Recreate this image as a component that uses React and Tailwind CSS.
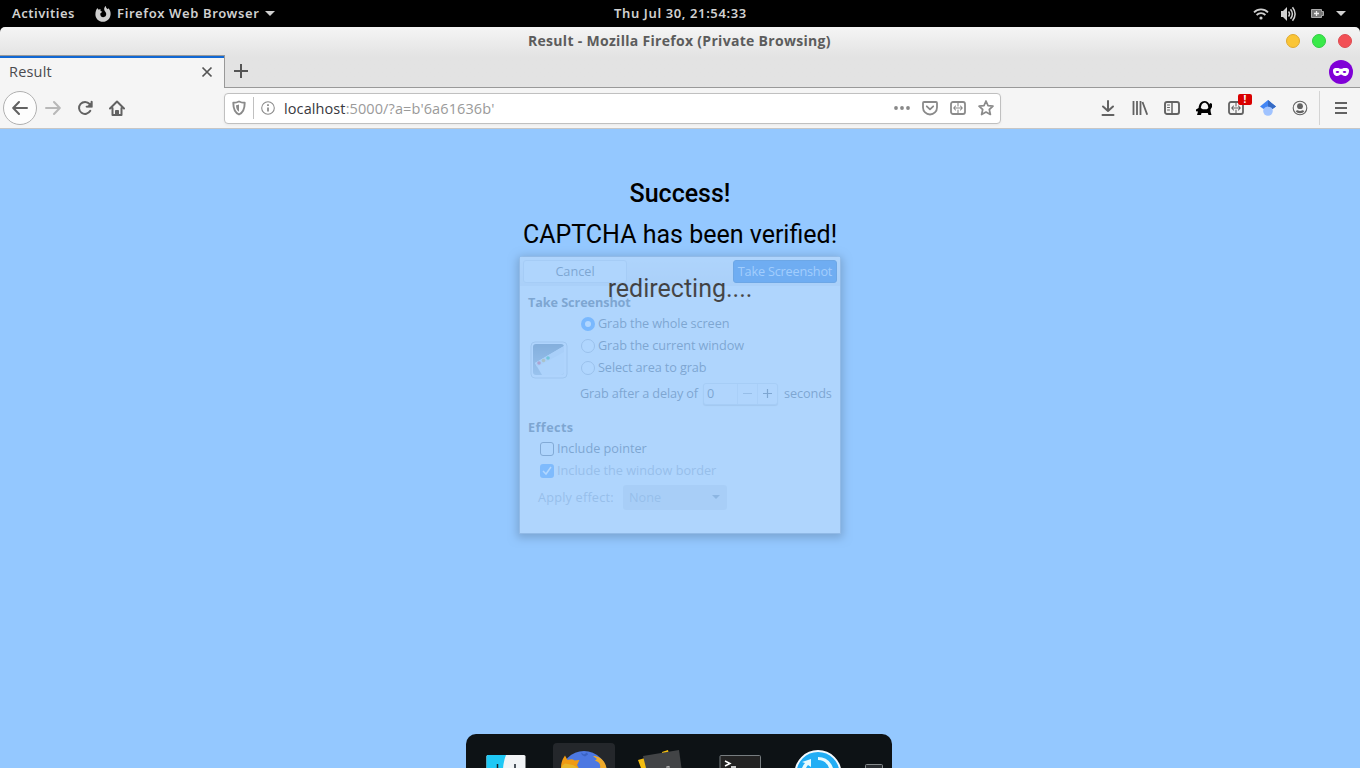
import React from "react";

function Icon({ className = "", size = "size-4", children }) {
  return (
    <svg
      viewBox="0 0 16 16"
      className={`${size} shrink-0 ${className}`}
      fill="none"
      stroke="currentColor"
      strokeWidth="2"
      strokeLinecap="round"
      strokeLinejoin="round"
    >
      {children}
    </svg>
  );
}

function TopBar() {
  return (
    <header className="relative flex h-[27px] items-center bg-black font-['Noto_Sans',sans-serif] text-[13px] font-semibold text-[#d0d0d0]">
      <span className="ml-3 w-[63px] whitespace-nowrap tracking-[0.5px]">Activities</span>
      <svg viewBox="0 0 16 16" className="ml-5 size-4" fill="#cfcfcf">
        <path d="M2.4 2.1 3.2 3.6 5.6 3.2 5.5 5 7.3 5.7 5.3 7.5C5 9.7 6.4 11.2 8.2 11.2c2.2 0 3.6-2 2.8-4.2-.5-1.3-1.7-2-1.8-3.5C9.1 2 9.7.8 10.8.1c0 1.700.9 2.300 1.9 3.200l.7-1C14.900 4 15.900 6 15.600 8.500 15.200 12.700 12 15.800 8 15.800 3.700 15.800.4 12.600.4 8.500.4 5.900 1.200 3.700 2.400 2.100Z" />
      </svg>
      <span className="ml-1.5 w-[143px] whitespace-nowrap tracking-[0.65px]">Firefox Web Browser</span>
      <svg viewBox="0 0 10 5" className="ml-[5px] h-[5px] w-2.5" fill="#cfcfcf"><path d="M0 0h10L5 5z" /></svg>
      <span className="absolute left-[614px] whitespace-nowrap tracking-[0.62px]">Thu Jul 30, 21:54:33</span>
      <div className="ml-auto flex items-center pr-3.5">
        <svg viewBox="0 0 16 16" className="size-4 translate-x-px" fill="none" stroke="#d0d0d0" strokeWidth="1.800">
          <path d="M1 6.300a10 10 0 0 1 14 0" />
          <path d="M3.600 9a6.300 6.300 0 0 1 8.800 0" />
          <circle cx="8" cy="12" r="1.600" fill="#d0d0d0" stroke="none" />
        </svg>
        <svg viewBox="0 0 16 16" className="ml-3 size-4 translate-x-px" fill="none" stroke="#d0d0d0" strokeWidth="1.500">
          <path d="M0 5h2l4-4v14l-4-4H0z" fill="#d0d0d0" stroke="none" />
          <path d="M7.500 5.500q2 2.500 0 5M9.500 3.300q3.800 4.700 0 9.400M11.500 1.300q5.200 6.700 0 13.400" />
        </svg>
        <svg viewBox="0 0 13 9" className="ml-[15px] h-[9px] w-[13px]">
          <path d="M.5.5h10v2h2v4h-2v2H.5z" fill="#777" stroke="#aaa" />
          <path d="M5.500 2v5M3 4.500h5" stroke="#eee" strokeWidth="1.300" />
        </svg>
        <svg viewBox="0 0 10 5" className="ml-3 h-[5px] w-2.5" fill="#d0d0d0"><path d="M0 0h10L5 5z" /></svg>
      </div>
    </header>
  );
}

function TitleAndTabs() {
  return (
    <div className="bg-black">
      <div className="h-[61px] rounded-t-[5px] border-b border-[#999] bg-linear-to-b from-[#f5f5f5] from-0% via-[#e3e3e3] via-50% to-[#e3e3e3]">
        <div className="relative flex h-7 items-center justify-end pr-2">
          <h1 className="absolute left-[528px] whitespace-nowrap pb-0.5 font-['Open_Sans',sans-serif] text-[14px] font-bold tracking-[0.3px] text-[#5c5c5c]">
            Result - Mozilla Firefox (Private Browsing)
          </h1>
          <div className="flex gap-3">
            <i className="size-3.5 rounded-full border border-[#dfa92f] bg-[#fac536]" />
            <i className="size-3.5 rounded-full border border-[#31cc43] bg-[#39ea49]" />
            <i className="size-3.5 rounded-full border border-[#dd4a50] bg-[#f25056]" />
          </div>
        </div>
        <div className="flex h-[33px] items-center">
          <div className="flex h-[33px] w-[225px] items-center justify-between border-t border-r border-[#999] bg-[#f5f5f5]">
            <div className="flex h-full w-full items-center border-t-2 border-[#1168d3] pr-[11px] pb-0.5 pl-[9px]">
              <span className="font-['Open_Sans',sans-serif] text-[14.500px] tracking-[0.2px] text-[#4a4a4f]">Result</span>
              <svg viewBox="0 0 12 12" className="ml-auto size-3" stroke="#555" strokeWidth="1.700" fill="none"><path d="m1.500 1.500 9 9m0-9-9 9" /></svg>
            </div>
          </div>
          <svg viewBox="0 0 14 14" className="mb-0.5 ml-[9px] size-3.5" stroke="#555" strokeWidth="2" fill="none"><path d="M7 0v14M0 7h14" /></svg>
          <div className="mr-[7px] ml-auto flex size-6 items-center justify-center rounded-full bg-[#8000d7]">
            <svg viewBox="0 0 16 8" className="h-2 w-4" fill="#fff" fillRule="evenodd">
              <path d="M0 2.500C0 .6 1.500 0 4 0c2 0 3 .8 4 .8S10 0 12 0c2.500 0 4 .6 4 2.500C16 5.500 14.500 8 12 8c-2 0-3-1.500-4-1.500S6 8 4 8C1.500 8 0 5.500 0 2.500ZM2.600 4c.5.800 1.100 1 1.900 1S6 4.700 6.400 4C5.900 3.200 5.300 3 4.500 3S3.100 3.200 2.600 4Zm7 0c.4.7 1.100 1 1.900 1s1.400-.2 1.900-1c-.5-.8-1.100-1-1.900-1s-1.400.2-1.900 1Z" />
            </svg>
          </div>
        </div>
      </div>
    </div>
  );
}

function ScreenGrabIcon({ className }) {
  return (
    <Icon className={className}>
      <rect x="1" y="2" width="14" height="12" rx="2" strokeWidth="1.800" />
      <path d="M8 3v3M8 10v3M4 8h8M5.500 6 3.700 8l1.800 2M10.500 6l1.800 2-1.800 2" strokeWidth="1.100" />
    </Icon>
  );
}

function Toolbar() {
  return (
    <nav className="flex h-[41px] items-center border-b border-[#c6c6c6] bg-[#f5f5f5] text-[#626262]">
      <div className="ml-[3px] flex size-[34px] items-center justify-center rounded-full border border-[#b0b0b0] bg-[#fdfdfd]">
        <Icon><path d="M15 8H1.500M7 2 1.200 8 7 14" /></Icon>
      </div>
      <Icon className="ml-2 text-[#b8b8b8]"><path d="M1 8h13.500M9 2l5.800 6L9 14" /></Icon>
      <Icon className="ml-4">
        <path d="M13.300 10.800A6 6 0 1 1 12.600 4" />
        <path d="M15.500 1v6.500H9z" fill="currentColor" stroke="none" />
        <path d="M14.500 1.500V6.500H9.500" strokeLinejoin="miter" strokeWidth="1.700" />
      </Icon>
      <Icon className="ml-4">
        <path d="M1 8.500 8 1.500l7 7M3.500 8v7h9V8" />
        <path d="M6.500 15v-4.500h3V15" fill="currentColor" strokeWidth="1" />
      </Icon>
      <div className="ml-[99px] flex h-[31px] w-[777px] items-center rounded-[4px] border border-[#c0c0c0] bg-white pl-[7px] text-[#8a8a8a] shadow-[0_1px_3px_rgba(0,0,0,0.05)]">
        <svg viewBox="0 0 14 16" className="h-4 w-3.5" fill="none" stroke="currentColor">
          <path d="M7 1.500C5 2.500 3 2.800 1.300 2.800c0 5 .5 9.500 5.700 11.700 5.200-2.200 5.700-6.700 5.700-11.700C11 2.800 9 2.500 7 1.500Z" strokeWidth="1.900" strokeLinejoin="round" />
          <path d="M7 4.500c-1 .5-2 .7-3 .8.100 3 .7 5 3 6.400z" fill="currentColor" stroke="none" />
        </svg>
        <div className="ml-[7px] h-[22px] w-px bg-[#c0c0c0]" />
        <svg viewBox="0 0 16 16" className="ml-[7px] size-3.5" fill="none" stroke="currentColor">
          <circle cx="8" cy="8" r="7.200" strokeWidth="1.200" />
          <path d="M8 7.300v4.700M8 3.800v1.900" strokeWidth="2" />
        </svg>
        <span className="ml-[9px] whitespace-nowrap pt-0.5 font-['Open_Sans',sans-serif] text-[14.500px] tracking-[0.1px] text-[#9a9a9a]">
          <span className="text-[#38383d]">localhost</span>:5000/?a=b'6a61636b'
        </span>
        <div className="ml-auto flex items-center gap-3 pr-1.5">
          <Icon className="text-[#888]"><g fill="currentColor" stroke="none"><circle cx="2" cy="8" r="1.900" /><circle cx="8" cy="8" r="1.900" /><circle cx="14" cy="8" r="1.900" /></g></Icon>
          <Icon><path d="M2 2h12a1 1 0 0 1 1 1v4.500a7 7 0 0 1-14 0V3a1 1 0 0 1 1-1Z" strokeWidth="1.800" /><path d="m4.800 6.300 3.200 3 3.200-3" strokeWidth="1.800" /></Icon>
          <ScreenGrabIcon />
          <Icon><path d="m8 1 2 4.700 5 .5-3.700 3.300 1.100 5L8 12l-4.400 2.500 1.100-5L1 6.200l5-.5z" strokeWidth="1.700" /></Icon>
        </div>
      </div>
      <div className="ml-auto flex items-center">
        <div className="flex items-center gap-4">
          <Icon><path d="M8 1v9.500M3 6.500l5 4.500 5-4.500M2.500 15h11" /></Icon>
          <Icon><path d="M1.500 1v14M5 1v14M8.500 1v14M10.500 2l4.700 12.800" strokeWidth="1.800" strokeLinecap="butt" /></Icon>
          <Icon><rect x="1" y="2" width="14" height="12" rx="2" strokeWidth="1.900" /><path d="M8 2v12" strokeWidth="1.500" /><path d="M3.500 5h2M3.500 7.500h2M3.500 10h2" strokeWidth="1" /></Icon>
          <svg viewBox="0 0 16 16" className="size-4 text-black" fill="currentColor" fillRule="evenodd">
            <path d="M2.600 8C3 4 5 1 8.500 1c2.500 0 4 1.500 4.800 3.500L14 3l2 .8V7l-1.500 2.500.2 2.500.8 3h-3l-.7-2H5.500L5 15H1l1-3.500-2-.3V9.500ZM4.800 8l2 1.300h4L12.300 8c0-3-1.500-5.300-3.800-5.300S5.200 5 4.800 8Z" />
          </svg>
          <div className="relative size-4">
            <ScreenGrabIcon />
            <b className="absolute -top-1.5 left-2.5 flex h-[11px] w-3.5 items-center justify-center rounded-[2px] bg-[#d90000] font-['Noto_Sans',sans-serif] text-[10px] text-white">!</b>
          </div>
          <svg viewBox="0 0 16 16" className="size-4">
            <circle cx="8" cy="11" r="4.800" fill="#a0c3ff" />
            <path d="M8 0 0 6.500l3.500 2.600Q5 6.500 8 6.500t4.500 2.600L16 6.500z" fill="#4285f4" />
            <path d="m8 0 8 6.500-3.500 2.600Q11 6.500 8 6.500z" fill="#356ac3" />
          </svg>
          <svg viewBox="0 0 16 16" className="size-4" fill="none" stroke="currentColor">
            <circle cx="8" cy="8" r="6.800" strokeWidth="1.100" />
            <circle cx="8" cy="6.200" r="2.900" fill="currentColor" stroke="none" />
            <path d="M3.700 11.200c1-1 1.800-1 2.500-.6 1 .6 2.600.6 3.600 0 .7-.4 1.500-.4 2.500.6-.8 1.300-2.300 2-4.300 2s-3.500-.7-4.300-2Z" fill="currentColor" stroke="none" />
          </svg>
        </div>
        <div className="ml-[11px] h-[34px] w-px bg-[#d4d4d4]" />
        <svg viewBox="0 0 12 12" className="mr-[13px] ml-[15px] size-3" stroke="currentColor" strokeWidth="2"><path d="M0 1h12M0 6h12M0 11h12" /></svg>
      </div>
    </nav>
  );
}

function Radio({ on, children }) {
  return (
    <div className="flex h-[22px] items-center">
      <i className={on ? "size-3.5 rounded-full border-[4.500px] border-[#3592fc] bg-white" : "size-3.5 rounded-full border border-[#a8b0bc] bg-white/50"} />
      <span className="ml-[3px] whitespace-nowrap tracking-[-0.1px]">{children}</span>
    </div>
  );
}

function ScreenshotThumb() {
  return (
    <svg viewBox="0 0 38 38" className="size-[38px]">
      <defs>
        <linearGradient id="thumb-sky" x1="0" y1="0" x2="0" y2="1">
          <stop offset="0" stopColor="#5c7086" />
          <stop offset="1" stopColor="#a8b6c5" />
        </linearGradient>
      </defs>
      <rect x="1" y="1" width="36" height="36" rx="4" fill="#f5f6f8" stroke="#bcc3cd" />
      <rect x="3" y="3" width="31" height="31" rx="3" fill="url(#thumb-sky)" />
      <path d="m5 22 29-17v26q0 3-3 3H12z" fill="#eef0f5" />
      <path d="m5 22 29-17v6L7 26z" fill="#dfe3ea" />
      <circle cx="9" cy="22" r="1.800" fill="#f0475a" />
      <circle cx="13.500" cy="19.500" r="1.800" fill="#e5b53e" />
      <circle cx="18" cy="17" r="1.800" fill="#1cc37c" />
    </svg>
  );
}

function ScreenshotDialog() {
  return (
    <section className="absolute top-[127px] left-[519px] h-[278px] w-[322px] rounded-t-[4px] border border-[#8b99aa] bg-[#f7f7f8] font-['Open_Sans',sans-serif] text-[12.700px] text-[#46505e] opacity-[0.28] shadow-[0_2px_9px_2px_rgba(0,0,0,0.6)]">
      <div className="flex h-[29px] items-center justify-between bg-linear-to-b from-[#f4f5f7] to-[#e4e6ea] px-[3px]">
        <button className="h-[23px] w-[104px] rounded-[3px] border border-[#d3d8e0] bg-[#f5f7f9]">Cancel</button>
        <button className="h-[23px] w-[104px] whitespace-nowrap rounded-[3px] border border-[#0c56a8] bg-[#1168d3] tracking-[-0.2px] text-[#c5dcf8]">Take Screenshot</button>
      </div>
      <h2 className="mt-[7px] ml-2 text-[12.700px] leading-[18px] font-bold tracking-[-0.1px]">Take Screenshot</h2>
      <div className="flex">
        <div className="mt-[30px] ml-2.5"><ScreenshotThumb /></div>
        <div className="ml-3 pt-[1.500px]">
          <div className="ml-[1px] flex flex-col">
            <Radio on>Grab the whole screen</Radio>
            <Radio>Grab the current window</Radio>
            <Radio>Select area to grab</Radio>
          </div>
          <div className="mt-[3.500px] flex h-[23px] items-center">
            <span className="w-[123px] whitespace-nowrap tracking-[-0.15px]">Grab after a delay of</span>
            <div className="flex h-[22px] w-[75px] items-center rounded-[3px] border border-[#d5dae1] bg-[#f8f9fa] shadow-[0_1px_1px_rgba(0,0,0,0.18)]">
              <span className="w-[33px] pl-[3px]">0</span>
              <span className="flex h-full w-5 items-center justify-center border-l border-[#dfe2e7] text-[#a0a6b0]"><svg viewBox="0 0 9 9" className="size-[9px]" stroke="currentColor"><path d="M0 4.500h9" /></svg></span>
              <span className="flex h-full w-5 items-center justify-center border-l border-[#dfe2e7]"><svg viewBox="0 0 9 9" className="size-[9px]" stroke="currentColor" strokeWidth="1.200"><path d="M0 4.500h9M4.500 0v9" /></svg></span>
            </div>
            <span className="ml-[6px] whitespace-nowrap tracking-[-0.1px]">seconds</span>
          </div>
        </div>
      </div>
      <h2 className="mt-[13px] ml-2 text-[12.700px] leading-[18px] font-bold tracking-[0.4px]">Effects</h2>
      <div className="ml-5 flex h-[25px] items-center">
        <i className="size-3.5 rounded-[3px] border border-[#56606e]" />
        <span className="ml-[3px] whitespace-nowrap">Include pointer</span>
      </div>
      <div className="ml-5 flex h-5 items-center text-[#9fa8b5]">
        <span className="flex size-3.5 items-center justify-center rounded-[3px] bg-[#4a9dfb]"><svg viewBox="0 0 10 10" className="size-2.5" fill="none" stroke="#fff" strokeWidth="1.500"><path d="m1 5 3 3 5-7" /></svg></span>
        <span className="ml-[3px] whitespace-nowrap">Include the window border</span>
      </div>
      <div className="mt-[3px] ml-[18px] flex h-[26px] items-center text-[#9fa8b5]">
        <span className="w-[85px] whitespace-nowrap pt-0.5 tracking-[0.2px]">Apply effect:</span>
        <div className="flex h-[25px] w-[104px] items-center justify-between rounded-[3px] bg-[#dce0e5] pr-[7px] pl-1.5">
          <span className="pt-px">None</span><svg viewBox="0 0 8 4" className="h-1 w-2" fill="#7d8998"><path d="M0 0h8L4 4z" /></svg>
        </div>
      </div>
    </section>
  );
}

function Dock() {
  return (
    <footer className="absolute bottom-0 left-[466px] flex h-[34px] w-[426px] items-start overflow-hidden rounded-t-[10px] bg-[#0d1215]">
      <svg viewBox="0 0 40 14" className="mt-[21px] ml-5 h-3.5 w-10 shrink-0">
        <rect x=".5" width="39" height="20" rx="1.500" fill="#f1f4f6" />
        <path d="M.5 1.500Q.5 0 2 0H20q-2.500 6-3 14H.5z" fill="#1fc8f5" />
        <path d="M11.500 9v5M29 9v5" stroke="#17212b" strokeWidth="1.500" />
      </svg>
      <div className="mt-[9px] ml-[27px] h-[25px] w-[62px] shrink-0 rounded-t-[4px] bg-[#24272b]">
        <svg viewBox="0 0 62 25" className="h-[25px] w-[62px]">
          <circle cx="31" cy="31" r="23" fill="#4c78e2" />
          <path d="M28 9.500l3 2 3-2 1 2-3 2-3-1.500z" fill="#3a63c4" />
          <path d="M8 25c0-5 1-8 4-12.500l2.500 4.500q5-1.500 7 .5l5-.5-2.500 5 2 3.500z" fill="#f09a13" />
          <path d="M8 25q1-3 4-4.500l8 1.500 5 3z" fill="#e7b62b" />
          <path d="M40 13c6 0 12 4 13.500 12H47q1-4-2-6l-3-1.500 2-1.500z" fill="#efaa29" />
        </svg>
      </div>
      <svg viewBox="0 0 50 25" className="mt-[9px] ml-[23px] h-[25px] w-[50px] shrink-0">
        <path d="m0 17 7-2 3 10H3zM24 9l6-2 1 4-7 1z" fill="#f3bd10" />
        <path d="m5 13 36-6 2.500 18H8z" fill="#424446" />
        <path d="m28 24.500 1-1.500 1 .8 1-1 1 1.700z" fill="#ddd" />
      </svg>
      <svg viewBox="0 0 44 14" className="mt-5 ml-[30px] h-3.5 w-11 shrink-0">
        <rect x="2" y="1.500" width="40.500" height="20" rx="1" fill="#232323" stroke="#777d80" />
        <path d="m7 7 5 2.500-5 2.500M13 13h5" stroke="#fff" strokeWidth="1.500" fill="none" />
      </svg>
      <svg viewBox="0 0 50 20" className="mt-3.5 ml-[31px] h-5 w-[50px] shrink-0">
        <circle cx="25" cy="25.500" r="22.500" fill="#22aef5" stroke="#f5fbff" strokeWidth="2" />
        <path d="M9 20q1-3 3-5l-3-1 9-3v8l-3-2q-1 1-2 3zM25 9q11 0 15 11h-4q-3-8-11-8z" fill="#e8fbff" />
      </svg>
      <svg viewBox="0 0 18 4" className="mt-[30px] ml-[22px] h-1 w-[18px] shrink-0"><rect x=".5" y=".5" width="17" height="10" rx="1" fill="#292d31" stroke="#858a8c" /></svg>
    </footer>
  );
}

export default function App() {
  return (
    <div className="flex h-[768px] w-[1360px] flex-col overflow-hidden">
      <TopBar />
      <TitleAndTabs />
      <Toolbar />
      <main className="relative flex-1 bg-[#94c8ff] text-center font-[Roboto,sans-serif] text-[25px] leading-[30px] text-black">
        <h2 className="pt-[50px] font-medium">Success!</h2>
        <p className="mt-[11px]">CAPTCHA has been verified!</p>
        <p className="mt-6">redirecting....</p>
        <div className="text-left leading-normal"><ScreenshotDialog /></div>
        <Dock />
      </main>
    </div>
  );
}
